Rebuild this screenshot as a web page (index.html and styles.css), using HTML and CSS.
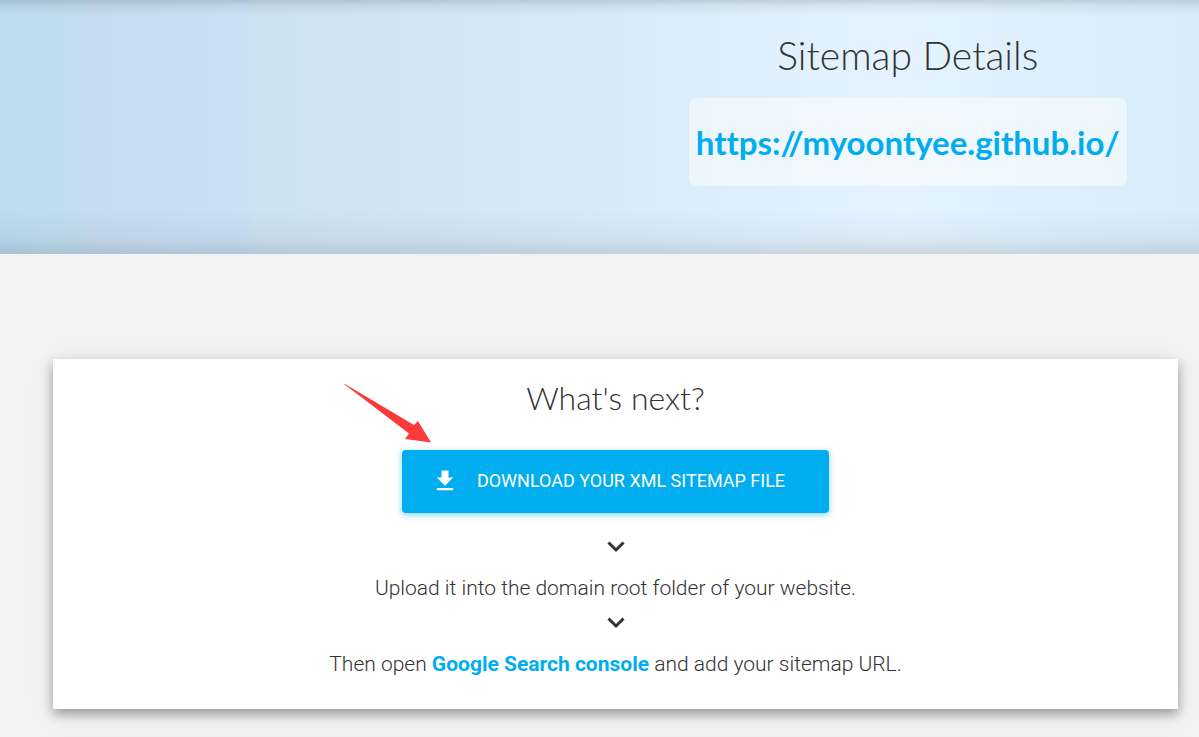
FILE: index.html
```html
<!DOCTYPE html>
<html lang="en">
<head>
<meta charset="utf-8">
<meta name="viewport" content="width=device-width, initial-scale=1">
<title>Sitemap Details</title>
<link rel="stylesheet" href="styles.css">
</head>
<body>
<header class="hero">
  <div class="hero-details">
    <h1 class="hero-title">Sitemap Details</h1>
    <a class="site-url" href="https://myoontyee.github.io/">https://myoontyee.github.io/</a>
  </div>
</header>
<main class="content">
  <section class="card">
    <h2 class="card-title">What's next?</h2>
    <div class="download">
      <button class="download-button" type="button">
        <svg class="download-icon" viewBox="0 0 24 24" aria-hidden="true"><path d="M19 9h-4V3H9v6H5l7 7 7-7zM5 18v2h14v-2H5z"/></svg>
        <span>DOWNLOAD YOUR XML SITEMAP FILE</span>
      </button>
      <svg class="pointer" viewBox="0 0 88 60" aria-hidden="true"><path d="M0 0L1 0L70 41L74 37L87 58.500L61 55L65 49.500Z"/></svg>
    </div>
    <svg class="chevron" viewBox="0 0 18 12" aria-hidden="true"><path d="M1.500 1.500L9 9L16.500 1.500"/></svg>
    <p class="step">Upload it into the domain root folder of your website.</p>
    <svg class="chevron" viewBox="0 0 18 12" aria-hidden="true"><path d="M1.500 1.500L9 9L16.500 1.500"/></svg>
    <p class="step">Then open <a class="step-link" href="#console">Google Search console</a> and add your sitemap URL.</p>
  </section>
  <section class="card"></section>
</main>
</body>
</html>
```
FILE: styles.css
```css
* { box-sizing: border-box; }

body {
  margin: 0;
  height: 100vh;
  overflow: hidden;
  background: #f3f3f3;
  color: #333;
  font-family: Roboto, "Liberation Sans", sans-serif;
}

.hero {
  display: grid;
  grid-template-columns: 1fr 1fr;
  column-gap: 44px;
  padding: 32px 21px 68px 53px;
  background:
    linear-gradient(rgba(0, 0, 0, 0.14), rgba(0, 0, 0, 0.05) 6px, transparent 16px),
    linear-gradient(0deg, rgba(0, 0, 0, 0.11), rgba(0, 0, 0, 0.04) 16px, transparent 44px),
    linear-gradient(90deg, #bedbf0 0%, #c1ddef 7%, #c5dbf0 7.2%, #c9e0f5 20.8%, #cbe2f2 21%, #d0e5f6 34%, #d8eaf8 50%, #e4f3ff 75%, #daedfa 94%, #d9ecfa 100%);
}

.hero-details {
  grid-column: 2;
  display: flex;
  flex-direction: column;
  align-items: center;
  gap: 20px;
}

.hero-title {
  margin: 0;
  font: 300 39px/46px Lato, sans-serif;
}

.site-url {
  padding: 20px 7px;
  border-radius: 8px;
  background: rgba(255, 255, 255, 0.5);
  color: #00adef;
  font: 700 33px/48px Lato, sans-serif;
  font-variant-ligatures: none;
  text-decoration: none;
}

.content {
  display: grid;
  gap: 35px;
  padding: 105px 21px 0 53px;
}

.card {
  display: flex;
  flex-direction: column;
  align-items: center;
  min-height: 350px;
  padding: 19px 20px 0;
  background: #fff;
  box-shadow: 0 5px 11px rgba(0, 0, 0, 0.36), 0 4px 30px rgba(0, 0, 0, 0.06);
}

.card-title {
  margin: 0 0 32px;
  font: 300 32px/40px Lato, sans-serif;
}

.download { position: relative; margin-bottom: 28px; }

.download-button {
  display: flex;
  align-items: center;
  gap: 18px;
  height: 63px;
  padding: 0 44px 2px 29px;
  border: 0;
  border-radius: 4px;
  background: #00adef;
  box-shadow: 0 2px 6px rgba(0, 173, 239, 0.5);
  color: #fff;
  font: 400 18px/24px Roboto, sans-serif;
}

.download-icon { width: 28px; height: 28px; fill: currentColor; }

.pointer {
  position: absolute;
  left: -58px;
  top: -66px;
  width: 88px;
  height: 60px;
  fill: #fc3a3a;
}

.chevron {
  width: 18px;
  height: 12px;
  fill: none;
  stroke: #333;
  stroke-width: 3;
}

.step {
  margin: 20px 0 14px;
  font-size: 21px;
  font-weight: 300;
  line-height: 30px;
  text-align: center;
}

.step-link { color: #00adef; font-weight: 700; text-decoration: none; }
```
